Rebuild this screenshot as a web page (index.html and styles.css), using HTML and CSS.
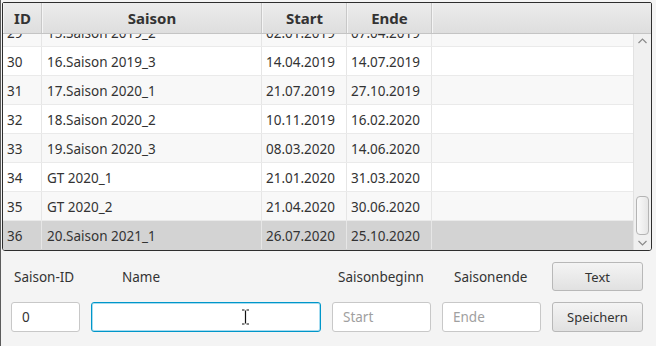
FILE: index.html
```html
<!DOCTYPE html>
<html>
<head>
<meta charset="utf-8">
<link rel="stylesheet" href="styles.css">
</head>
<body>
<div class="window">
  <div class="table">
    <div class="thead">
      <div class="th c-id">ID</div>
      <div class="th c-name">Saison</div>
      <div class="th c-date">Start</div>
      <div class="th c-date">Ende</div>
      <div class="th c-fill"></div>
    </div>
    <div class="tbody">
      <div class="rows">
        <div class="tr odd"><div class="td c-id">29</div><div class="td c-name">15.Saison 2019_2</div><div class="td c-date">02.01.2019</div><div class="td c-date">07.04.2019</div><div class="td c-fill"></div></div>
        <div class="tr"><div class="td c-id">30</div><div class="td c-name">16.Saison 2019_3</div><div class="td c-date">14.04.2019</div><div class="td c-date">14.07.2019</div><div class="td c-fill"></div></div>
        <div class="tr odd"><div class="td c-id">31</div><div class="td c-name">17.Saison 2020_1</div><div class="td c-date">21.07.2019</div><div class="td c-date">27.10.2019</div><div class="td c-fill"></div></div>
        <div class="tr"><div class="td c-id">32</div><div class="td c-name">18.Saison 2020_2</div><div class="td c-date">10.11.2019</div><div class="td c-date">16.02.2020</div><div class="td c-fill"></div></div>
        <div class="tr odd"><div class="td c-id">33</div><div class="td c-name">19.Saison 2020_3</div><div class="td c-date">08.03.2020</div><div class="td c-date">14.06.2020</div><div class="td c-fill"></div></div>
        <div class="tr"><div class="td c-id">34</div><div class="td c-name">GT 2020_1</div><div class="td c-date">21.01.2020</div><div class="td c-date">31.03.2020</div><div class="td c-fill"></div></div>
        <div class="tr odd"><div class="td c-id">35</div><div class="td c-name">GT 2020_2</div><div class="td c-date">21.04.2020</div><div class="td c-date">30.06.2020</div><div class="td c-fill"></div></div>
        <div class="tr sel"><div class="td c-id">36</div><div class="td c-name">20.Saison 2021_1</div><div class="td c-date">26.07.2020</div><div class="td c-date">25.10.2020</div><div class="td c-fill"></div></div>
      </div>
      <div class="scrollbar">
        <svg class="arrow" width="17" height="14" viewBox="0 0 17 14"><path d="M4.5 9 L8.5 5 L12.5 9" fill="none" stroke="#8a8a8a" stroke-width="1.2"/></svg>
        <div class="track"><div class="thumb"></div></div>
        <svg class="arrow" width="17" height="14" viewBox="0 0 17 14"><path d="M4.5 5 L8.5 9 L12.5 5" fill="none" stroke="#8a8a8a" stroke-width="1.2"/></svg>
      </div>
    </div>
  </div>

  <div class="form">
    <div class="lbl l1">Saison-ID</div>
    <div class="lbl l2">Name</div>
    <div class="lbl l3">Saisonbeginn</div>
    <div class="lbl l4">Saisonende</div>
    <button class="btn">Text</button>

    <div class="input">0</div>
    <div class="input focused">
      <svg class="ibeam" width="9" height="16" viewBox="0 0 9 16"><path d="M1 1 H3.5 M5.5 1 H8 M4.5 1.5 V14.5 M1 15 H3.5 M5.5 15 H8" fill="none" stroke="#111" stroke-width="1.2"/></svg>
    </div>
    <div class="input ph">Start</div>
    <div class="input ph">Ende</div>
    <button class="btn">Speichern</button>
  </div>
</div>
</body>
</html>
```

FILE: styles.css
```css
html, body {
  margin: 0;
  padding: 0;
}
body {
  background: #f4f4f4;
  font-family: "Noto Sans", "Open Sans", sans-serif;
  font-size: 13px;
  color: #333;
  width: 656px;
  height: 346px;
  overflow: hidden;
}
.window {
  height: 346px;
  border-left: 1px solid #5c5c5c;
  box-sizing: border-box;
  padding: 2px 0 0 1px;
}
.table {
  width: 650px;
  height: 249px;
  box-sizing: border-box;
  border: 1px solid #2e2e2e;
  border-radius: 2px 2px 3px 3px;
  background: #fff;
  display: flex;
  flex-direction: column;
  overflow: hidden;
}
.thead {
  display: flex;
  height: 31px;
  box-sizing: border-box;
  border-bottom: 1px solid #c4c4c4;
  background: linear-gradient(#ececec, #dedede);
  flex: none;
}
.th {
  display: flex;
  align-items: center;
  justify-content: center;
  font-weight: bold;
  font-size: 15px;
  color: #333;
  box-sizing: border-box;
  border-right: 1px solid #c8c8c8;
  border-left: 1px solid #f4f4f4;
}
.th.c-fill { border-right: none; }
.c-id { width: 39px; flex: none; }
.c-name { width: 220px; flex: none; }
.c-date { width: 85px; flex: none; }
.c-fill { flex: 1; }
.tbody {
  flex: 1;
  display: flex;
  overflow: hidden;
}
.rows {
  flex: 1;
  margin-top: -16px;
}
.tr {
  display: flex;
  height: 29px;
  box-sizing: border-box;
  border-bottom: 1px solid #eaeaea;
  background: #fff;
}
.tr.odd { background: #f8f8f8; }
.tr.sel { background: #d3d3d3; border-bottom-color: #d3d3d3; }
.td {
  box-sizing: border-box;
  border-right: 1px solid #e6e6e6;
  display: flex;
  align-items: center;
  padding-left: 4px;
  padding-top: 1px;
  font-size: 13.5px;
  color: #333;
  white-space: nowrap;
}
.td.c-name { padding-left: 5px; }
.td.c-fill { border-right: none; }
.scrollbar {
  width: 17px;
  flex: none;
  background: #f0f0f0;
  border-left: 1px solid #e2e2e2;
  display: flex;
  flex-direction: column;
}
.arrow { flex: none; display: block; }
.track {
  flex: 1;
  position: relative;
  padding: 0 2px;
  display: flex;
  flex-direction: column;
  justify-content: flex-end;
}
.thumb {
  height: 37px;
  margin-bottom: 1px;
  border: 1px solid #b4b4b4;
  border-radius: 4px;
  background: linear-gradient(90deg, #fafafa, #e6e6e6);
}
.form {
  display: grid;
  grid-template-columns: 69px 230px 99px 99px 91px;
  grid-template-rows: 29px 30px;
  column-gap: 11px;
  row-gap: 11px;
  margin: 11px 0 0 9px;
}
.lbl {
  display: flex;
  align-items: center;
  font-size: 13.5px;
  color: #333;
  padding-top: 1px;
}
.l1 { padding-left: 3px; }
.l2 { padding-left: 31px; }
.l3 { padding-left: 6px; }
.l4 { padding-left: 12px; }
.btn {
  font-family: inherit;
  font-size: 13px;
  color: #333;
  border: 1px solid #b8b8b8;
  border-radius: 3px;
  background: linear-gradient(#f4f4f4, #e1e1e1);
  padding: 0;
  margin: 0;
}
.input {
  position: relative;
  box-sizing: border-box;
  border: 1px solid #c8c8c8;
  border-radius: 3px;
  background: #fff;
  display: flex;
  align-items: center;
  padding-left: 10px;
  font-size: 13.5px;
  color: #333;
}
.input.ph { color: #a0a0a0; }
.input.focused {
  border: 1px solid #0096c9;
  box-shadow: inset 0 0 0 1px #a6dcf0;
}
.ibeam {
  position: absolute;
  left: 149px;
  top: 6px;
}
```
